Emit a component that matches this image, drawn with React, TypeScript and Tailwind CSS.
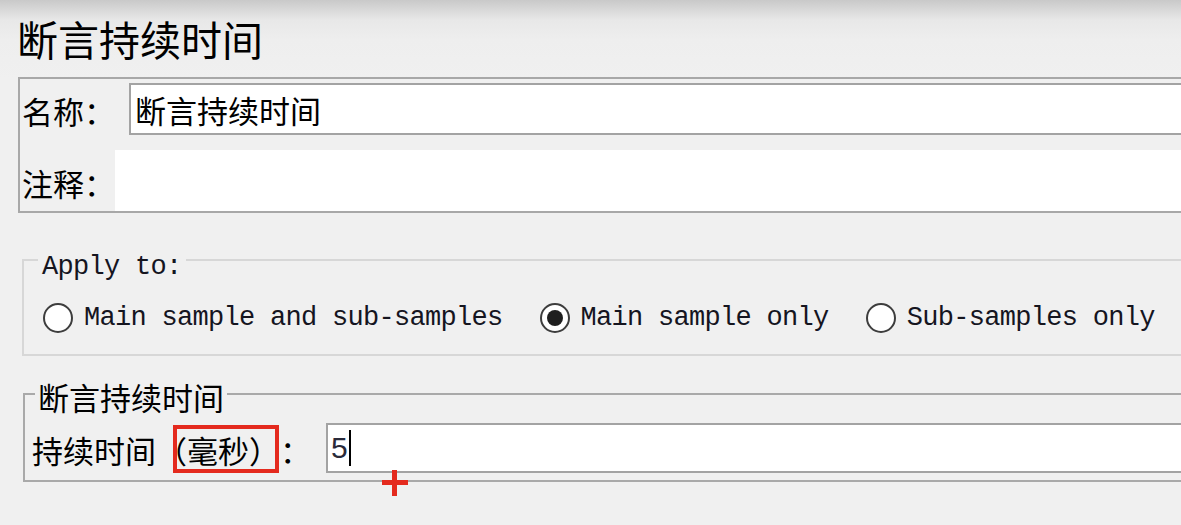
import React from "react";

const cjk = "font-['Noto_Sans_CJK_SC','Noto_Sans',sans-serif]";
const mono = "font-['Liberation_Mono','Noto_Sans_CJK_SC',monospace]";

function Radio({ checked, label }: { checked?: boolean; label: string }) {
  return (
    <div className="flex items-center">
      <span className="flex h-[30px] w-[30px] items-center justify-center rounded-full border-2 border-[#3d3d3d] bg-white">
        {checked ? <span className="h-[16px] w-[16px] rounded-full bg-[#1f1f1f]" /> : null}
      </span>
      <span className={`ml-[11px] whitespace-pre text-[27px] leading-[30px] tracking-[-0.7px] text-[#15151f] ${mono}`}>
        {label}
      </span>
    </div>
  );
}

export default function App() {
  return (
    <div
      className={`h-[525px] w-[1181px] overflow-hidden bg-[linear-gradient(to_bottom,#c9c9c9_0px,#e8e8e8_20px,#eeeeee_40px,#f0f0f0_80px)] text-black [text-spacing-trim:space-all] ${cjk}`}
    >
      <div className="w-[1260px]">
        {/* Title */}
        <div className="pl-[17px] pt-[18px] text-[41px] leading-[41px] whitespace-nowrap">断言持续时间</div>

        {/* Name / comment box */}
        <div className="ml-[18px] mt-[18px] border-2 border-[#a8a8a8] pt-[4px]">
          <div className="flex h-[52px] items-center">
            <span className="w-[109px] pl-[2px] pt-[3px] text-[31px] leading-[31px] whitespace-nowrap">名称：</span>
            <div className="flex h-[52px] flex-1 items-center border-2 border-[#a3a3a3] bg-white pl-[4px]">
              <span className="pt-[1px] text-[31px] leading-[31px] whitespace-nowrap">断言持续时间</span>
            </div>
          </div>
          <div className="mt-[15px] flex h-[61px] items-center">
            <span className="w-[95px] pl-[2px] pt-[3px] text-[31px] leading-[31px] whitespace-nowrap">注释：</span>
            <div className="h-[61px] flex-1 bg-white" />
          </div>
        </div>

        {/* Apply to group */}
        <div className="relative ml-[22px] mt-[46px] border-2 border-[#d7d7d7] pb-[21px] pl-[19px] pt-[42px]">
          <span
            className={`absolute left-[14px] top-[-7px] bg-[#f0f0f0] px-[4px] text-[27px] leading-[27px] tracking-[-0.7px] text-[#15151f] whitespace-pre ${mono}`}
          >
            Apply to:
          </span>
          <div className="flex items-center gap-[37px]">
            <Radio label="Main sample and sub-samples" />
            <Radio checked label="Main sample only" />
            <Radio label="Sub-samples only" />
          </div>
        </div>

        {/* Duration group */}
        <div className="relative ml-[23px] mt-[37px] border-2 border-[#a9a9a9] pb-[7px] pl-[7px] pt-[28px]">
          <span className="absolute left-[10px] top-[-14px] bg-[#f0f0f0] px-[3px] text-[31px] leading-[31px] whitespace-nowrap">
            断言持续时间
          </span>
          <div className="flex h-[50px] items-center">
            <span className="w-[294px] pt-[3px] text-[31px] leading-[31px] whitespace-nowrap">持续时间（毫秒）：</span>
            <div className="flex h-[50px] flex-1 items-center border-2 border-[#a3a3a3] bg-white pl-[3px]">
              <span className="font-['Liberation_Sans',sans-serif] text-[30px] leading-[30px] text-[#2a2a3a]">5</span>
              <span className="ml-[1px] h-[36px] w-[2px] bg-black" />
            </div>
          </div>
          {/* red annotation box */}
          <div className="absolute left-[148px] top-[30px] h-[48px] w-[106px] border-4 border-[#e42a1e]" />
          {/* red plus cursor */}
          <div className="absolute left-[357px] top-[75px] h-[26px] w-[26px]">
            <span className="absolute left-0 top-[10px] h-[5px] w-[26px] bg-[#e42a1e]" />
            <span className="absolute left-[10px] top-0 h-[26px] w-[5px] bg-[#e42a1e]" />
          </div>
        </div>
      </div>
    </div>
  );
}
